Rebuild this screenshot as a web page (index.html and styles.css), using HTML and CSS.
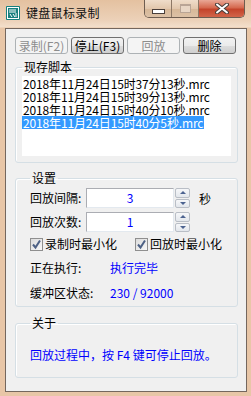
FILE: index.html
```html
<!DOCTYPE html>
<html lang="zh-CN">
<head>
    <meta charset="UTF-8">
    <title>键盘鼠标录制</title>
    <link rel="stylesheet" href="styles.css">
</head>
<body>
    <div class="window">
        <div class="titlebar">
            <svg class="app-icon" width="14" height="14" viewBox="0 0 14 14">
                <rect x="0" y="0" width="14" height="14" rx="1" fill="#17807f"/>
                <rect x="1.5" y="1.5" width="11" height="11" fill="none" stroke="#ffffff" stroke-width="1"/>
                <path d="M3 4h7M3 6h7M4 8l2 3M7 8l2 3M10 7v4" stroke="#ffffff" stroke-width="1" fill="none"/>
            </svg>
            <span class="title">键盘鼠标录制</span>
            <div class="caption-buttons">
                <div class="cap cap-min"><span class="min-glyph"></span></div>
                <div class="cap cap-max"><span class="max-glyph"></span></div>
                <div class="cap cap-close">
                    <svg width="14" height="11" viewBox="0 0 14 11">
                        <path d="M2 1.5L12 9.5M12 1.5L2 9.5" stroke="#4a3f3a" stroke-width="4" stroke-linecap="round"/>
                        <path d="M2 1.5L12 9.5M12 1.5L2 9.5" stroke="#ffffff" stroke-width="2" stroke-linecap="round"/>
                    </svg>
                </div>
            </div>
        </div>

        <div class="client">
            <div class="toolbar">
                <button disabled>录制(F2)</button>
                <button>停止(F3)</button>
                <button disabled>回放</button>
                <button>删除</button>
            </div>

            <fieldset class="group scripts">
                <legend>现存脚本</legend>
                <div class="listbox">
                    <div class="item"><span>2018年11月24日15时37分13秒.mrc</span></div>
                    <div class="item"><span>2018年11月24日15时39分13秒.mrc</span></div>
                    <div class="item"><span>2018年11月24日15时40分10秒.mrc</span></div>
                    <div class="item selected"><span>2018年11月24日15时40分5秒.mrc</span></div>
                </div>
            </fieldset>

            <fieldset class="group settings">
                <legend>设置</legend>
                <div class="row">
                    <span class="label">回放间隔:</span>
                    <div class="textbox">3</div>
                    <div class="spin">
                        <span class="spin-btn"><span class="arrow-up"></span></span>
                        <span class="spin-btn"><span class="arrow-down"></span></span>
                    </div>
                    <span class="unit">秒</span>
                </div>
                <div class="row row-gap">
                    <span class="label">回放次数:</span>
                    <div class="textbox">1</div>
                    <div class="spin">
                        <span class="spin-btn"><span class="arrow-up"></span></span>
                        <span class="spin-btn"><span class="arrow-down"></span></span>
                    </div>
                </div>
                <div class="row check-row">
                    <label class="check">
                        <span class="box">
                            <svg width="11" height="11" viewBox="0 0 11 11"><path d="M2 5.5L4.5 8.5L9 1.5" stroke="#4d6185" stroke-width="2" fill="none"/></svg>
                        </span>录制时最小化
                    </label>
                    <label class="check second">
                        <span class="box">
                            <svg width="11" height="11" viewBox="0 0 11 11"><path d="M2 5.5L4.5 8.5L9 1.5" stroke="#4d6185" stroke-width="2" fill="none"/></svg>
                        </span>回放时最小化
                    </label>
                </div>
                <div class="row status-row">
                    <span class="status-label">正在执行:</span>
                    <span class="value">执行完毕</span>
                </div>
                <div class="row status-row buffer">
                    <span class="status-label">缓冲区状态:</span>
                    <span class="value">230 / 92000</span>
                </div>
            </fieldset>

            <fieldset class="group about">
                <legend>关于</legend>
                <p class="about-text">回放过程中，按 F4 键可停止回放。</p>
            </fieldset>
        </div>
    </div>
</body>
</html>
```

FILE: styles.css
```css
:root {
    --frame: #e8c6a7;
    --client: #f0f0f0;
    --group-border: #d5dfe5;
    --blue: #0000ff;
    --text: #000000;
}

* {
    margin: 0;
    padding: 0;
    box-sizing: border-box;
}

html, body {
    width: 251px;
    height: 396px;
    overflow: hidden;
}

body {
    background-color: var(--frame);
    font-family: "Noto Sans CJK SC", "DejaVu Sans", sans-serif;
    font-size: 12px;
    color: var(--text);
}

.window {
    width: 251px;
    height: 396px;
    background: linear-gradient(to bottom, #e4c1a0 0, #ecd1b8 20px, #f3dfcb 27px, var(--frame) 28px);
}

/* title bar */
.titlebar {
    height: 28px;
    display: flex;
    align-items: flex-start;
}

.app-icon {
    margin: 6px 0 0 6px;
}

.title {
    margin: 6px 0 0 6px;
    line-height: 14px;
    letter-spacing: 0.3px;
    color: #111;
}

.caption-buttons {
    margin-left: auto;
    margin-right: 6px;
    display: flex;
    height: 18px;
    border: 1px solid #6e5d50;
    border-top: none;
    border-radius: 0 0 5px 5px;
    overflow: hidden;
}

.cap {
    height: 17px;
    display: flex;
    align-items: center;
    justify-content: center;
}

.cap-min, .cap-max {
    width: 27px;
    background: linear-gradient(to bottom, #efddca 0, #e2c7ad 50%, #d6b797 51%, #dcc1a6 100%);
    border-right: 1px solid #8d7866;
}

.cap-close {
    width: 45px;
    background: linear-gradient(to bottom, #e9a896 0, #d5694f 45%, #c4442b 55%, #d2654a 100%);
}

.min-glyph {
    width: 13px;
    height: 5px;
    margin-top: 5px;
    background: #ffffff;
    border: 1px solid #4a3f3a;
}

.max-glyph {
    width: 11px;
    height: 9px;
    border: 1px solid #b9a596;
    border-top-width: 2px;
    background: #e8d6c5;
}

/* client area */
.client {
    margin: 0 4px 0 5px;
    height: 364px;
    background-color: var(--client);
    border: 1px solid #74675e;
    padding: 8px 8px 0 9px;
}

.toolbar {
    display: flex;
    gap: 3px;
}

.toolbar button {
    width: 53px;
    height: 17px;
    font-family: inherit;
    font-size: 12px;
    line-height: 14px;
    color: var(--text);
    border: 1px solid #707070;
    border-radius: 3px;
    background: linear-gradient(to bottom, #f2f2f2 0, #ebebeb 50%, #dddddd 51%, #cfcfcf 100%);
}

.toolbar button:disabled {
    color: #8d8d8d;
    border-color: #adb2b5;
    background: #f4f4f4;
}

/* group boxes */
.group {
    border: 1px solid var(--group-border);
    border-radius: 3px;
    box-shadow: inset 1px 1px 0 #ffffff;
    padding: 0 6px;
}

.group legend {
    line-height: 12px;
    padding: 0 2px;
    margin-left: 0;
}

.scripts {
    margin-top: 7px;
    padding-top: 3px;
    padding-bottom: 6px;
}

.listbox {
    height: 80px;
    background: #ffffff;
    line-height: 13px;
    padding-top: 1px;
    letter-spacing: -0.15px;
}

.item {
    height: 13px;
}

.item span {
    display: inline-block;
    height: 13px;
    padding: 0 1px;
    white-space: nowrap;
}

.item.selected span {
    background: #3399ff;
    color: #ffffff;
}

.settings {
    margin-top: 9px;
    padding: 4px 6px 6px 14px;
}

.row {
    display: flex;
    align-items: center;
}

.row-gap {
    margin-top: 4px;
}

.label {
    width: 56px;
    line-height: 20px;
}

.textbox {
    width: 88px;
    height: 20px;
    background: #ffffff;
    border: 1px solid #e3e9ef;
    border-top-color: #abadb3;
    border-left-color: #abadb3;
    color: var(--blue);
    text-align: center;
    line-height: 18px;
}

.spin {
    margin-left: 1px;
    display: flex;
    flex-direction: column;
    width: 15px;
    height: 20px;
    gap: 1px;
}

.spin-btn {
    flex: 1;
    display: flex;
    align-items: center;
    justify-content: center;
    border: 1px solid #b9bec6;
    border-radius: 2px;
    background: linear-gradient(to bottom, #f6f7f9, #e3e7ec);
}

.arrow-up, .arrow-down {
    width: 0;
    height: 0;
    border-left: 3.5px solid transparent;
    border-right: 3.5px solid transparent;
}

.arrow-up {
    border-bottom: 3px solid #4c6390;
}

.arrow-down {
    border-top: 3px solid #4c6390;
}

.unit {
    margin-left: 9px;
}

.check-row {
    margin-top: 5px;
    height: 14px;
}

.check {
    display: flex;
    align-items: center;
    gap: 2px;
    line-height: 14px;
}

.check.second {
    margin-left: 18px;
}

.box {
    width: 13px;
    height: 13px;
    border: 1px solid #8f8f8f;
    background: linear-gradient(135deg, #dcdcdc, #f8f8f8);
    display: flex;
    align-items: center;
    justify-content: center;
}

.status-row {
    margin-top: 10px;
    line-height: 14px;
}

.status-row.buffer {
    margin-top: 11px;
}

.status-label {
    width: 80px;
}

.value {
    color: var(--blue);
}

.about {
    margin-top: 10px;
    padding: 19px 6px 15px 14px;
}

.about-text {
    color: var(--blue);
    line-height: 14px;
    white-space: nowrap;
}
```
